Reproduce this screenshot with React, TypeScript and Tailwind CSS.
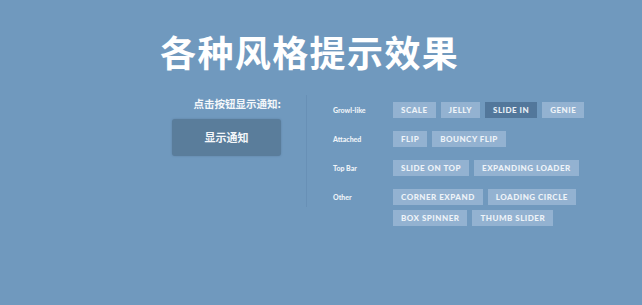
import React from 'react';

type Group = {
  label: string;
  items: string[];
};

const groups: Group[] = [
  { label: 'Growl-like', items: ['SCALE', 'JELLY', 'SLIDE IN', 'GENIE'] },
  { label: 'Attached', items: ['FLIP', 'BOUNCY FLIP'] },
  { label: 'Top Bar', items: ['SLIDE ON TOP', 'EXPANDING LOADER'] },
  { label: 'Other', items: ['CORNER EXPAND', 'LOADING CIRCLE', 'BOX SPINNER', 'THUMB SLIDER'] },
];

const active = 'SLIDE IN';

export default function App() {
  return (
    <div className="min-h-screen bg-[#7099be] text-white font-['Lato','Noto_Sans_CJK_SC',sans-serif]">
      <h1 className="pt-[27px] pl-[160px] text-[36px] leading-[48px] font-bold tracking-[1.4px] font-['Noto_Sans_CJK_SC',serif]">
        各种风格提示效果
      </h1>

      <div className="flex mt-[20px]">
        <div className="w-[281px] flex flex-col items-end pt-[1px]">
          <div className="text-[10.5px] leading-[15px] font-bold font-['Noto_Sans_CJK_SC',sans-serif] text-[#f4f7fa]">
            点击按钮显示通知:
          </div>
          <button className="mt-[8px] w-[109px] h-[37px] rounded-[3px] bg-[#5a7d9b] shadow-[0_0_2px_rgba(60,90,120,0.4)] text-[11px] font-bold font-['Noto_Sans_CJK_SC',sans-serif] text-[#f4f7fa]">
            显示通知
          </button>
        </div>

        <div className="ml-[25px] w-px h-[112px] bg-[#6890b6]" />

        <div className="pl-[26px] pt-[7px] flex flex-col gap-[13px]">
          {groups.map((g) => (
            <div key={g.label} className="flex">
              <div className="w-[60px] h-[16px] flex items-center text-[7px] font-black text-[#eef3f8]">
                {g.label}
              </div>
              <div className="w-[200px] flex flex-wrap gap-x-[5px] gap-y-[5px]">
                {g.items.map((it) => (
                  <div
                    key={it}
                    className={
                      it === active
                        ? 'h-[16px] px-[8px] flex items-center text-[8px] font-black tracking-[0.5px] bg-[#52779b] text-[#e8eff6]'
                        : 'h-[16px] px-[8px] flex items-center text-[8px] font-black tracking-[0.5px] bg-[#93b2d1] text-[#eef3f8]'
                    }
                  >
                    {it}
                  </div>
                ))}
              </div>
            </div>
          ))}
        </div>
      </div>
    </div>
  );
}
